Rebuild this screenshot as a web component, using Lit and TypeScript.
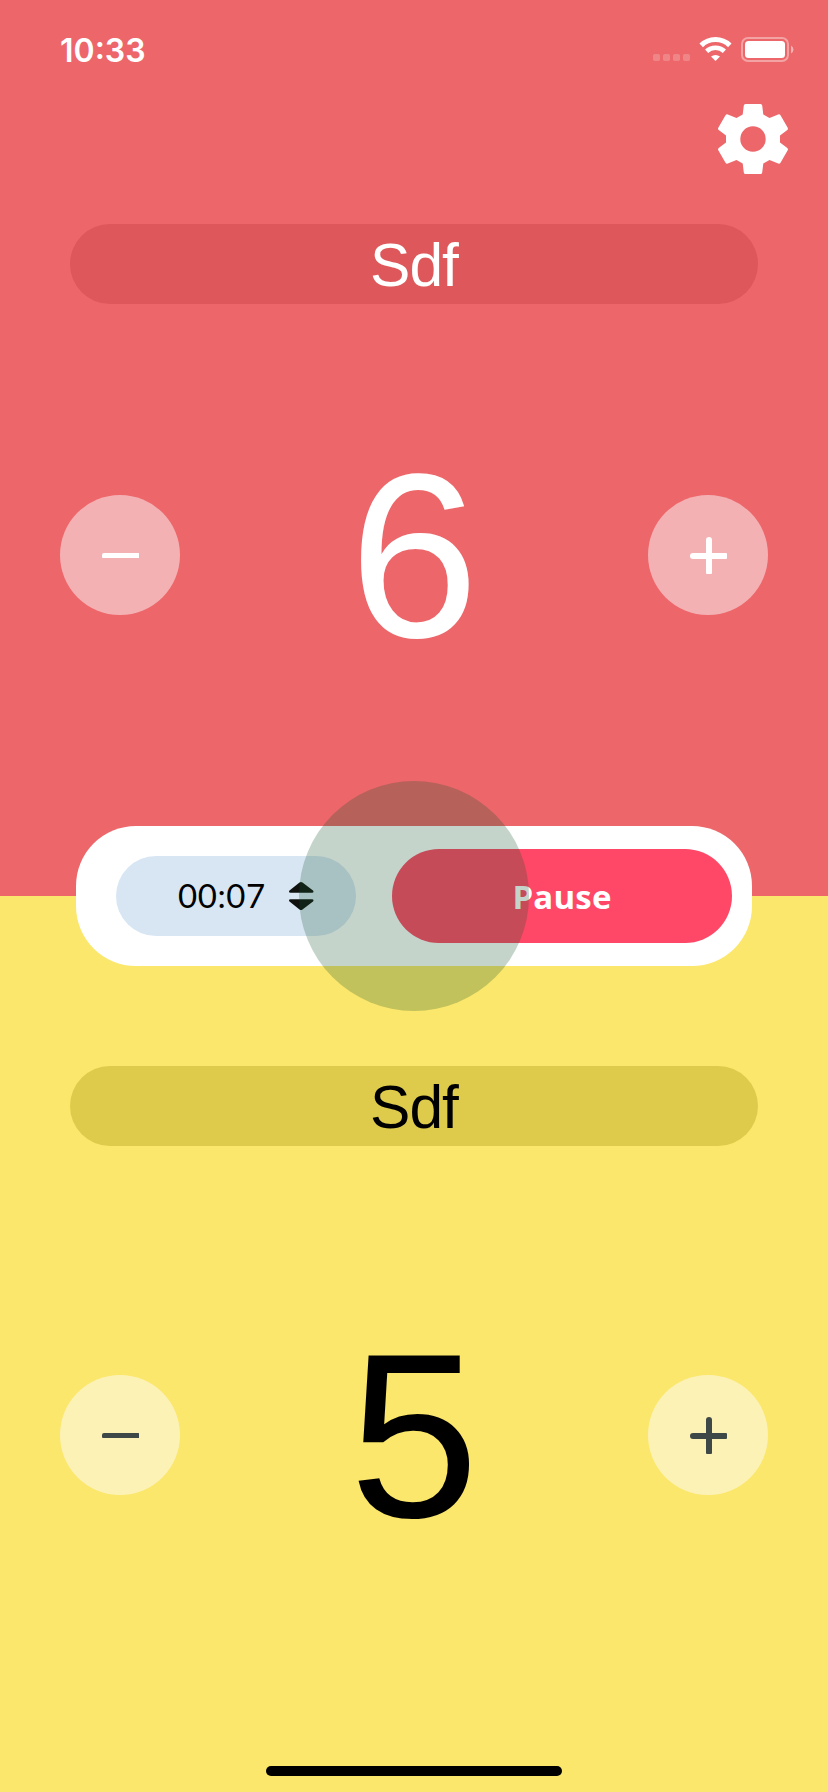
import { LitElement, html, css, svg } from "lit";
import { customElement, property } from "lit/decorators.js";

@customElement("round-button")
class RoundButton extends LitElement {
  @property() kind = "minus";
  static styles = css`
    :host { display: block; width: 120px; height: 120px; }
    .btn {
      display: block; width: 120px; height: 120px; padding: 0; border: 0;
      border-radius: 50%; background: var(--btn-bg); color: var(--btn-fg);
    }
    svg { display: block; fill: currentColor; }
  `;
  render() {
    return html`<button class="btn" aria-label=${this.kind}>
      <svg width="120" height="120" viewBox="0 0 120 120">
        ${this.kind === "plus"
          ? svg`<path d="M45 58H58V45a3 3 0 0 1 6 0V58H78a1 1 0 0 1 1 1v4a1 1 0 0 1-1 1H64V78a1 1 0 0 1-1 1H59a1 1 0 0 1-1-1V64H45a3 3 0 0 1 0-6z"/>`
          : svg`<path d="M44 58H78.500a.5 .5 0 0 1 .5 .5V62.500a.5 .5 0 0 1-.5 .5H43a1 1 0 0 1-1-1V60a2 2 0 0 1 2-2z"/>`}
      </svg>
    </button>`;
  }
}

@customElement("score-panel")
class ScorePanel extends LitElement {
  @property() name = "";
  @property({ type: Number }) score = 0;
  static styles = css`
    :host { display: flex; flex-direction: column; font-family: "Liberation Sans", sans-serif; color: var(--fg); }
    .name {
      height: 80px; margin: 0 70px; border-radius: 40px; background: var(--pill);
      font-size: 60.500px; line-height: 82px; text-align: center; letter-spacing: -1px;
    }
    .row { display: flex; align-items: center; justify-content: space-between; margin: var(--row-gap) 60px 0; height: 200px; }
    .score { font-size: 233px; line-height: 203px; height: 200px; }
  `;
  render() {
    return html`
      <div class="name">${this.name}</div>
      <div class="row">
        <round-button kind="minus"></round-button>
        <div class="score">${this.score}</div>
        <round-button kind="plus"></round-button>
      </div>`;
  }
}

@customElement("app-root")
class AppRoot extends LitElement {
  static styles = css`
    :host { display: block; }
    .screen { position: relative; width: 828px; height: 1792px; overflow: hidden; display: flex; flex-direction: column; }
    .half { height: 896px; display: flex; flex-direction: column; box-sizing: border-box; }
    .red { background: #ed666a; --fg: #fff; --pill: #de575a; --btn-bg: #f4b1b4; --btn-fg: #fff; --row-gap: 151px; }
    .yellow {
      background: #fbe76b; padding-top: 170px;
      --fg: #000; --pill: #decb4b; --btn-bg: #fdf2b6; --btn-fg: #3e4846; --row-gap: 189px;
    }
    .status { display: flex; justify-content: space-between; height: 88px; padding: 0 34px 0 60px; color: #fff; }
    .clock { font: 600 32px/40px Inter, sans-serif; padding-top: 31px; }
    .icons { display: block; margin-top: 30px; }
    .tools { display: flex; justify-content: flex-end; height: 120px; padding: 16px 40px 0 0; box-sizing: border-box; margin-bottom: 16px; }
    .bar {
      position: absolute; left: 76px; top: 826px; width: 676px; height: 140px; box-sizing: border-box;
      border-radius: 60px; background: #fff; display: flex; align-items: center; padding: 0 20px 0 40px; justify-content: space-between;
    }
    .time {
      width: 240px; height: 80px; border-radius: 40px; background: #d8e6f3; box-sizing: border-box;
      display: flex; align-items: center; padding-left: 62px; color: #000;
      font: 400 33px/80px Lato, sans-serif; letter-spacing: 0.6px;
    }
    .digits { width: 110px; height: 80px; line-height: 79px; }
    .pause {
      width: 340px; height: 94px; padding: 0; border: 0; border-radius: 47px; background: #ff4867; color: #fff;
      font: 700 33px/96px "Open Sans", sans-serif; text-align: center; letter-spacing: 0.2px;
    }
    .touch { position: absolute; left: 299px; top: 781px; width: 230px; height: 230px; border-radius: 50%; background: rgba(22, 82, 46, 0.25); }
    .home { margin: auto auto 16px; width: 296px; height: 10px; border-radius: 5px; background: #000; }
  `;
  render() {
    return html`
      <div class="screen">
        <section class="half red">
          <div class="status">
            <div class="clock">10:33</div>
            <svg class="icons" width="142" height="40" viewBox="652 30 142 40" fill="#fff">
              <g opacity=".2">
                ${[653, 663, 673, 683].map((x) => svg`<rect x=${x} y="54" width="7" height="7" rx="1.800"/>`)}
              </g>
              <g fill="none" stroke="#fff">
                <path d="M701.200 45.400a20.500 20.500 0 0 1 28.600 0" stroke-width="5"/>
                <path d="M706.600 51.200a13 13 0 0 1 17.800 0" stroke-width="4.600"/>
              </g>
              <path d="M711 56.600a6.800 6.800 0 0 1 9 0L715.500 61z"/>
              <rect x="742" y="38" width="46" height="23" rx="6" fill="none" stroke="#fff" stroke-width="2" opacity=".4"/>
              <rect x="745" y="41" width="40" height="17" rx="3.500"/>
              <path d="M791 45.500a4.500 4.500 0 0 1 0 8z" opacity=".5"/>
            </svg>
          </div>
          <div class="tools">
            <svg width="70" height="70" viewBox="718 104 70 70" fill="#fff" fill-rule="evenodd">
              <path d="M745.500 104H760.500Q762 104 762.200 105.500L763.300 114.500L769.500 118L778.200 114.500Q779.700 114 780.500 115.300L787.700 127.800Q788.400 129 787.300 130L780 135.500V142.500L787.300 148Q788.400 149 787.700 150.200L780.500 162.700Q779.700 164 778.200 163.500L769.500 160L763.300 163.500L762.200 172.500Q762 174 760.500 174H745.500Q744 174 743.800 172.500L742.700 163.500L736.500 160L727.800 163.500Q726.300 164 725.500 162.700L718.300 150.200Q717.600 149 718.700 148L726 142.500V135.500L718.700 130Q717.600 129 718.300 127.800L725.500 115.300Q726.300 114 727.800 114.500L736.500 118L742.700 114.500L743.800 105.500Q744 104 745.500 104zM753 126.300a12.700 12.700 0 1 0 0 25.400a12.700 12.700 0 1 0 0-25.400z"/>
            </svg>
          </div>
          <score-panel name="Sdf" score="6"></score-panel>
        </section>
        <section class="half yellow">
          <score-panel name="Sdf" score="5"></score-panel>
          <div class="home"></div>
        </section>
        <div class="bar">
          <div class="time">
            <span class="digits">00:07</span>
            <svg width="26" height="30" viewBox="288 881 26 30" fill="#0f120f">
              <path d="M289 891.500Q289 891 289.500 890.600L299.500 882.600Q301 881.400 302.500 882.600L313 890.600Q313.500 891 313.500 891.500Q313.500 892.800 312 892.800H290.500Q289 892.800 289 891.500zM289 900.500Q289 901 289.500 901.400L299.500 909.400Q301 910.600 302.500 909.400L313 901.400Q313.500 901 313.500 900.500Q313.500 899.200 312 899.200H290.500Q289 899.200 289 900.500z"/>
            </svg>
          </div>
          <button class="pause">Pause</button>
        </div>
        <div class="touch"></div>
      </div>`;
  }
}
